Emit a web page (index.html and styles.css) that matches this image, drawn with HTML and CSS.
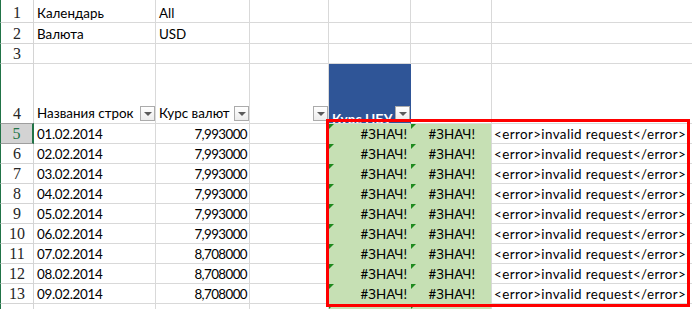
FILE: index.html
```html
<!DOCTYPE html>
<html lang="ru">
<head>
<meta charset="utf-8">
<title>Sheet</title>
<link rel="stylesheet" href="styles.css">
</head>
<body>
<div class="sheet">
  <div class="row r1">
    <div class="h">1</div><div class="c">Календарь</div><div class="c">All</div><div class="c"></div><div class="c"></div><div class="c"></div><div class="c"></div>
  </div>
  <div class="row r2">
    <div class="h">2</div><div class="c">Валюта</div><div class="c">USD</div><div class="c"></div><div class="c"></div><div class="c"></div><div class="c"></div>
  </div>
  <div class="row r3">
    <div class="h">3</div><div class="c"></div><div class="c"></div><div class="c"></div><div class="c"></div><div class="c"></div><div class="c"></div>
  </div>
  <div class="row r4">
    <div class="h">4</div>
    <div class="c hd"><span class="t">Названия строк</span><span class="dd"></span></div>
    <div class="c hd"><span class="t">Курс валют</span><span class="dd"></span></div>
    <div class="c hd"><span class="t"></span><span class="dd"></span></div>
    <div class="c hd blue"><span class="t">Курс НБУ</span><span class="dd"></span></div>
    <div class="c"></div>
    <div class="c"></div>
  </div>
  <div class="row"><div class="h sel">5</div><div class="c d">01.02.2014</div><div class="c num val">7,993000</div><div class="c"></div><div class="c g num">#ЗНАЧ!</div><div class="c g g2 num">#ЗНАЧ!</div><div class="c err">&lt;error&gt;invalid request&lt;/error&gt;</div></div>
  <div class="row"><div class="h">6</div><div class="c d">02.02.2014</div><div class="c num val">7,993000</div><div class="c"></div><div class="c g num">#ЗНАЧ!</div><div class="c g g2 num">#ЗНАЧ!</div><div class="c err">&lt;error&gt;invalid request&lt;/error&gt;</div></div>
  <div class="row"><div class="h">7</div><div class="c d">03.02.2014</div><div class="c num val">7,993000</div><div class="c"></div><div class="c g num">#ЗНАЧ!</div><div class="c g g2 num">#ЗНАЧ!</div><div class="c err">&lt;error&gt;invalid request&lt;/error&gt;</div></div>
  <div class="row"><div class="h">8</div><div class="c d">04.02.2014</div><div class="c num val">7,993000</div><div class="c"></div><div class="c g num">#ЗНАЧ!</div><div class="c g g2 num">#ЗНАЧ!</div><div class="c err">&lt;error&gt;invalid request&lt;/error&gt;</div></div>
  <div class="row"><div class="h">9</div><div class="c d">05.02.2014</div><div class="c num val">7,993000</div><div class="c"></div><div class="c g num">#ЗНАЧ!</div><div class="c g g2 num">#ЗНАЧ!</div><div class="c err">&lt;error&gt;invalid request&lt;/error&gt;</div></div>
  <div class="row"><div class="h">10</div><div class="c d">06.02.2014</div><div class="c num val">7,993000</div><div class="c"></div><div class="c g num">#ЗНАЧ!</div><div class="c g g2 num">#ЗНАЧ!</div><div class="c err">&lt;error&gt;invalid request&lt;/error&gt;</div></div>
  <div class="row"><div class="h">11</div><div class="c d">07.02.2014</div><div class="c num val">8,708000</div><div class="c"></div><div class="c g num">#ЗНАЧ!</div><div class="c g g2 num">#ЗНАЧ!</div><div class="c err">&lt;error&gt;invalid request&lt;/error&gt;</div></div>
  <div class="row"><div class="h">12</div><div class="c d">08.02.2014</div><div class="c num val">8,708000</div><div class="c"></div><div class="c g num">#ЗНАЧ!</div><div class="c g g2 num">#ЗНАЧ!</div><div class="c err">&lt;error&gt;invalid request&lt;/error&gt;</div></div>
  <div class="row"><div class="h">13</div><div class="c d">09.02.2014</div><div class="c num val">8,708000</div><div class="c"></div><div class="c g num">#ЗНАЧ!</div><div class="c g g2 num">#ЗНАЧ!</div><div class="c err">&lt;error&gt;invalid request&lt;/error&gt;</div></div>
  <div class="row"><div class="h"></div><div class="c"></div><div class="c"></div><div class="c"></div><div class="c g"></div><div class="c g g2"></div><div class="c"></div></div>
</div>
<div class="highlight"></div>
</body>
</html>
```
FILE: styles.css
```css
html, body {
  margin: 0;
  padding: 0;
  background: #ffffff;
}
body {
  width: 692px;
  height: 309px;
  overflow: hidden;
  position: relative;
}
.sheet {
  display: flex;
  flex-direction: column;
}
.row {
  display: grid;
  grid-template-columns: 34px 122px 94px 79px 82px 81px 220px;
  height: 20px;
}
.row.r1 { height: 23px; }
.row.r2 { height: 21px; }
.row.r3 { height: 20px; }
.row.r4 { height: 60px; }

.h {
  box-sizing: border-box;
  border-left: 1px solid #217346;
  border-right: 1px solid #d4d4d4;
  border-bottom: 1px solid #d4d4d4;
  display: flex;
  align-items: flex-end;
  justify-content: center;
  font-family: "Liberation Serif", serif;
  font-size: 16px;
  line-height: 16px;
  padding-bottom: 1px;
  color: #262626;
}
.h.sel {
  background: #d3d3d3;
  color: #217346;
  border-right: 2px solid #217346;
  border-top: 1px solid #9e9e9e;
  border-bottom-color: #9e9e9e;
  margin-top: -1px;
}

.c {
  box-sizing: border-box;
  border-right: 1px solid #d9d9d9;
  border-bottom: 1px solid #d9d9d9;
  display: flex;
  align-items: flex-end;
  padding: 0 3px 1px 3px;
  font-family: "Lato", "Liberation Sans", sans-serif;
  font-size: 13.4px;
  line-height: 16px;
  color: #000000;
  white-space: nowrap;
  overflow: hidden;
}
.c.num { justify-content: flex-end; }
.c.g2.num { padding-right: 16px; }
.c.d { letter-spacing: -0.3px; }
.c.val { letter-spacing: -0.6px; padding-right: 2px; }
.c.err { letter-spacing: 0.4px; padding-left: 2px; }

.c.hd {
  justify-content: space-between;
  padding-right: 0;
  padding-bottom: 2px;
}
.dd {
  flex: none;
  box-sizing: border-box;
  width: 15px;
  height: 15px;
  border: 1px solid #ababab;
  background: linear-gradient(#ffffff, #ececec);
  position: relative;
}
.dd::after {
  content: "";
  position: absolute;
  left: 3px;
  top: 5px;
  border-left: 4px solid transparent;
  border-right: 4px solid transparent;
  border-top: 4px solid #5a5a5a;
}
.c.blue {
  background: #2f5597;
  border-right-color: #2f5597;
  color: #ffffff;
  font-weight: bold;
}
.c.blue .t { margin-bottom: -6px; }

.c.g {
  background: #c6e0b4;
  border-right-color: #c6e0b4;
  border-bottom-color: #c6e0b4;
  position: relative;
}
.c.g2 { border-right-color: #d9d9d9; }
.c.g::before {
  content: "";
  position: absolute;
  left: 0;
  top: 0;
  border-top: 5px solid #1f8a1f;
  border-right: 5px solid transparent;
}

.highlight {
  position: absolute;
  left: 326px;
  top: 119px;
  width: 364px;
  height: 188px;
  box-sizing: border-box;
  border: 3px solid #ff0000;
}
```
